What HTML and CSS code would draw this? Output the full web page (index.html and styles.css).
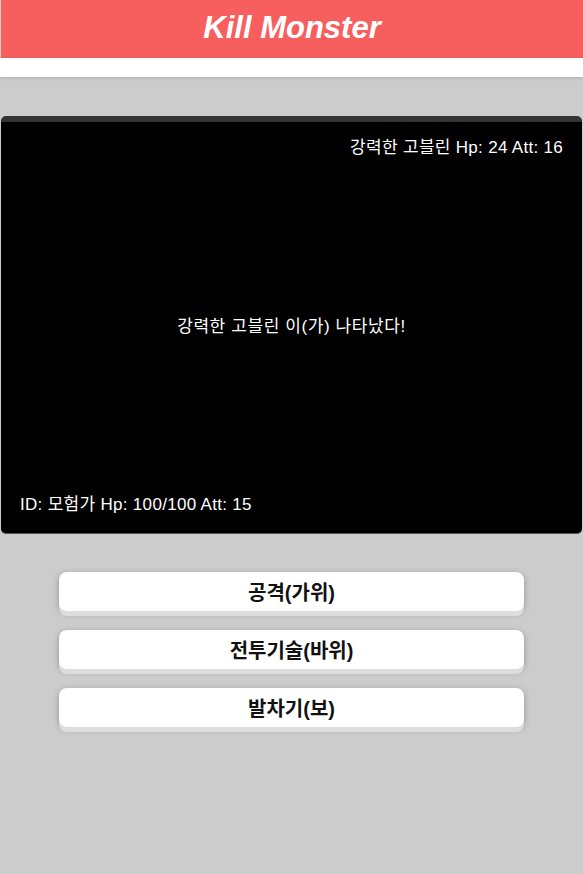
FILE: index.html
```html
<!DOCTYPE html>
<html lang="ko">
<head>
<meta charset="utf-8">
<title>Kill Monster</title>
<link rel="stylesheet" href="styles.css">
</head>
<body>
<header class="header"><h1 class="title">Kill Monster</h1></header>
<div class="band"></div>
<main class="main">
  <section class="panel">
    <div class="monster">강력한 고블린 Hp: 24 Att: 16</div>
    <div class="message">강력한 고블린 이(가) 나타났다!</div>
    <div class="player">ID: 모험가 Hp: 100/100 Att: 15</div>
  </section>
  <div class="actions">
    <button class="btn">공격(가위)</button>
    <button class="btn">전투기술(바위)</button>
    <button class="btn">발차기(보)</button>
  </div>
</main>
</body>
</html>
```
FILE: styles.css
```css
html, body {
  margin: 0;
  padding: 0;
  height: 100%;
}
body {
  background: #cccccc;
  font-family: "Liberation Sans", "Noto Sans CJK KR", sans-serif;
}
.header {
  background: #f75f5f;
  height: 58px;
  margin-left: 1px;
  display: flex;
  align-items: center;
  justify-content: center;
}
.title {
  margin: 0;
  color: #fff;
  font-size: 31px;
  font-weight: bold;
  font-style: italic;
  line-height: 1;
  position: relative;
  top: -2px;
}
.band {
  height: 19px;
  background: #fff;
  box-shadow: 0 1px 3px rgba(0,0,0,0.15);
}
.main {
  padding-top: 39px;
}
.panel {
  margin: 0 1px;
  height: 418px;
  box-sizing: border-box;
  background: #000;
  border-top: 6px solid #333;
  border-bottom: 1px solid #555;
  border-radius: 5px;
  padding: 16px 19px 18px;
  display: flex;
  flex-direction: column;
  color: #fff;
  font-size: 17px;
  letter-spacing: 0.3px;
  line-height: 20px;
}
.monster {
  text-align: right;
}
.message {
  flex: 1;
  display: flex;
  align-items: center;
  justify-content: center;
  letter-spacing: 0.6px;
}
.player {
  text-align: left;
}
.actions {
  margin-top: 38px;
  display: flex;
  flex-direction: column;
  align-items: center;
  gap: 19px;
}
.btn {
  width: 465px;
  height: 39px;
  border: none;
  border-radius: 8px;
  background: #fff;
  font-family: "Liberation Sans", "Noto Sans CJK KR", sans-serif;
  font-size: 20px;
  font-weight: bold;
  color: #111;
  box-shadow: 0 5px 0 #dddddd, 0 2px 6px rgba(0,0,0,0.3);
  padding: 0;
}
```
